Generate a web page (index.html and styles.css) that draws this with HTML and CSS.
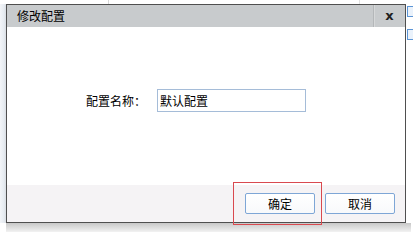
FILE: index.html
```html
<!DOCTYPE html>
<html lang="zh">
<head>
<meta charset="utf-8">
<title>修改配置</title>
<link rel="stylesheet" href="styles.css">
</head>
<body>
<div class="page">
  <div class="topstrip"><span class="topline"></span><span class="topline2"></span></div>
  <div class="middle">
    <div class="leftstrip"></div>
    <div class="dialog">
      <div class="titlebar">
        <span class="title">修改配置</span>
        <span class="sep"></span>
        <span class="close">x</span>
      </div>
      <div class="content">
        <div class="row">
          <label class="label" for="name">配置名称：</label>
          <input class="input" id="name" type="text" value="默认配置">
        </div>
      </div>
      <div class="footer">
        <div class="btnwrap">
          <button class="btn">确定</button>
          <span class="highlight"></span>
        </div>
        <button class="btn">取消</button>
      </div>
    </div>
    <div class="rightstrip">
      <span class="ricon"></span>
      <span class="ricon"></span>
    </div>
  </div>
  <div class="shadow"></div>
</div>
</body>
</html>
```
FILE: styles.css
```css
html, body {
  margin: 0;
  padding: 0;
  background: #ffffff;
}
body {
  width: 413px;
  height: 232px;
  overflow: hidden;
  font-family: "Noto Sans CJK SC", "Noto Sans", sans-serif;
  font-size: 12px;
  color: #000;
}
.page {
  display: flex;
  flex-direction: column;
  width: 413px;
  height: 232px;
}
.topstrip {
  height: 4px;
  position: relative;
  background: #fff;
}
.topline {
  position: absolute;
  left: 108px;
  top: 0;
  width: 1px;
  height: 4px;
  background: #d8d8d8;
}
.topline2 {
  position: absolute;
  left: 359px;
  top: 0;
  width: 1px;
  height: 4px;
  background: #e2e2e2;
}
.middle {
  display: flex;
  height: 219px;
}
.leftstrip {
  width: 6px;
  flex-shrink: 0;
  background: linear-gradient(to right, #f3f5f8 0, #e6ebf1 4px, #d9dde2 6px);
}
.dialog {
  width: 398px;
  flex-shrink: 0;
  border: 1px solid #4f4f4f;
  display: flex;
  flex-direction: column;
  background: #fff;
}
.titlebar {
  height: 22px;
  background: #c8cbcd;
  display: flex;
  align-items: center;
}
.title {
  padding-left: 10px;
  font-size: 12px;
  line-height: 22px;
  flex: 1;
}
.sep {
  width: 1px;
  height: 22px;
  background: #b4b7b9;
  box-shadow: 1px 0 0 #d6d8d9;
}
.close {
  width: 31px;
  text-align: center;
  font-family: "DejaVu Sans", sans-serif;
  font-weight: bold;
  font-size: 13px;
  line-height: 22px;
  color: #222;
}
.content {
  flex: 1;
  padding-top: 62px;
}
.row {
  display: flex;
  align-items: center;
  padding-left: 79px;
  gap: 11px;
}
.label {
  width: 60px;
  font-size: 12px;
}
.input {
  box-sizing: border-box;
  width: 149px;
  height: 23px;
  border: 1px solid #a5bcd8;
  padding: 0 2px;
  margin: 0;
  font-family: "Noto Sans CJK SC", sans-serif;
  font-size: 12px;
  color: #000;
  outline: none;
}
.footer {
  height: 37px;
  background: #f5f3f5;
  display: flex;
  justify-content: flex-end;
  align-items: flex-start;
  padding: 8px 10px 0 0;
  box-sizing: border-box;
  gap: 10px;
}
.btnwrap {
  position: relative;
  display: flex;
}
.btn {
  box-sizing: border-box;
  width: 70px;
  height: 21px;
  border: 1px solid #7ea6d6;
  border-radius: 2px;
  background: linear-gradient(#ffffff, #f8f9fb);
  font-family: "Noto Sans CJK SC", sans-serif;
  font-size: 12px;
  color: #000;
  padding: 0;
  margin: 0;
}
.highlight {
  position: absolute;
  left: -12px;
  top: -11px;
  width: 89px;
  height: 43px;
  border: 1px solid #d9494f;
  box-sizing: border-box;
}
.rightstrip {
  flex: 1;
  min-width: 0;
  overflow: hidden;
  display: flex;
  flex-direction: column;
  gap: 12px;
  padding-top: 2px;
  padding-left: 1px;
  background: #fff;
}
.ricon {
  display: block;
  flex-shrink: 0;
  width: 8px;
  height: 9px;
  border: 1px solid #5c95d6;
  border-right: none;
  background: #eaf2fb;
}
.shadow {
  flex: 1;
  margin-left: 6px;
  width: 405px;
  background: linear-gradient(#c8c8c8, #f2f2f2);
}
```
